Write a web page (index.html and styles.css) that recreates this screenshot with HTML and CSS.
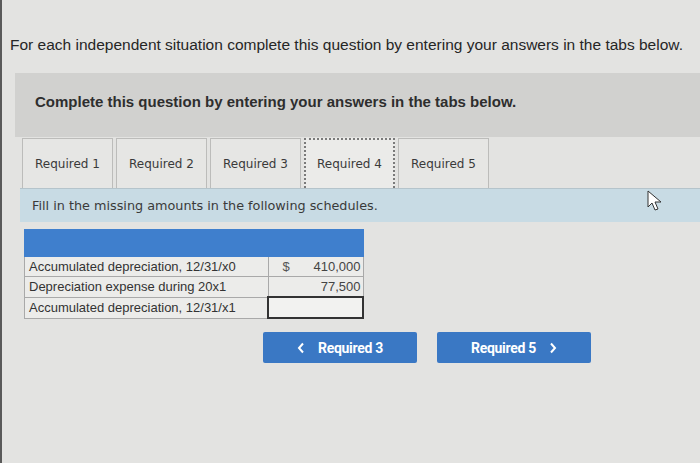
FILE: index.html
```html
<!DOCTYPE html>
<html>
<head>
<meta charset="utf-8">
<link rel="stylesheet" href="styles.css">
</head>
<body>
<div class="page">
  <p class="intro">For each independent situation complete this question by entering your answers in the tabs below.</p>
  <div class="panel">
    <div class="panel-head">Complete this question by entering your answers in the tabs below.</div>
    <div class="tabs">
      <div class="tab">Required 1</div>
      <div class="tab">Required 2</div>
      <div class="tab">Required 3</div>
      <div class="tab active">Required 4</div>
      <div class="tab">Required 5</div>
    </div>
    <div class="instr">Fill in the missing amounts in the following schedules.</div>
    <table class="sched">
      <tr class="hdr"><td colspan="3"></td></tr>
      <tr><td class="lbl">Accumulated depreciation, 12/31/x0</td><td class="cur">$</td><td class="amt">410,000</td></tr>
      <tr><td class="lbl">Depreciation expense during 20x1</td><td class="cur"></td><td class="amt">77,500</td></tr>
      <tr><td class="lbl">Accumulated depreciation, 12/31/x1</td><td class="input" colspan="2"></td></tr>
    </table>
    <div class="nav">
      <button class="btn"><svg class="chev" width="8" height="12" viewBox="0 0 8 12"><polyline points="6,1.5 2,6 6,10.5" fill="none" stroke="#fff" stroke-width="2"/></svg>Required 3</button>
      <button class="btn">Required 5<svg class="chev" width="8" height="12" viewBox="0 0 8 12"><polyline points="2,1.5 6,6 2,10.5" fill="none" stroke="#fff" stroke-width="2"/></svg></button>
    </div>
  </div>
  <svg class="cursor" width="16" height="22" viewBox="0 0 16 22"><path d="M1 1 L1 17 L5 13 L8 20 L11 19 L8 12 L14 12 Z" fill="#fff" stroke="#333" stroke-width="1"/></svg>
</div>
</body>
</html>
```
FILE: styles.css
```css
html, body { margin: 0; padding: 0; }
body { background: #e3e3e1; width: 700px; height: 463px; overflow: hidden; }
.page { position: relative; height: 463px; border-left: 2px solid #5a5a5a; box-sizing: border-box; }
.intro { margin: 0; padding: 36px 0 0 8px; font-family: "Liberation Sans", Arial, sans-serif; font-size: 15.5px; line-height: 18px; color: #262626; white-space: nowrap; }
.panel { margin: 19px 0 0 13px; }
.panel-head { background: #d1d1cf; height: 64px; box-sizing: border-box; padding: 20px 0 0 20px; font-family: "Liberation Sans", Arial, sans-serif; font-weight: bold; font-size: 15px; color: #2e2e2e; }
.tabs { display: flex; gap: 3px; padding: 1px 0 0 7px; height: 51px; box-sizing: border-box; }
.tab { width: 91px; height: 50px; box-sizing: border-box; border: 1px solid #bcbcba; border-bottom: none; background: #e6e6e4; display: flex; align-items: center; justify-content: center; font-family: "DejaVu Sans", Verdana, sans-serif; font-size: 12px; color: #3a3a3a; }
.tab.active { border: 2px dotted #7a7a7a; border-bottom: none; background: #ebebe9; }
.instr { margin-left: 5px; background: #c8dbe4; height: 34px; box-sizing: border-box; padding: 9px 0 0 12px; font-family: "DejaVu Sans", Verdana, sans-serif; font-size: 12.8px; color: #3a3a3a; border-top: 1px solid #b5c4cb; }
.sched { margin: 7px 0 0 9px; border-collapse: collapse; font-family: "Liberation Sans", Arial, sans-serif; font-size: 13px; color: #333; }
.sched td { border: 1px solid #a9a9a9; height: 19px; padding: 0 4px; background: #ececea; }
.sched .hdr td { background: #3f7fcd; height: 26px; border-color: #3f7fcd; }
.sched .lbl { width: 234px; }
.sched .cur { width: 18px; border-right: none; padding-left: 14px; color: #555; }
.sched .amt { width: 52px; text-align: right; border-left: none; padding-right: 2px; color: #444; }
.sched .input { border: 2px solid #333; background: #f2f2f0; }
.nav { display: flex; gap: 20px; margin: 13px 0 0 248px; }
.btn { width: 154px; height: 31px; border: none; border-radius: 2px; background: #3a78c4; color: #fff; font-family: Roboto, "Liberation Sans", sans-serif; font-weight: bold; font-size: 14px; letter-spacing: -0.3px; padding: 0; display: flex; align-items: center; justify-content: center; gap: 13px; }
.chev { display: block; }
.cursor { position: absolute; left: 645px; top: 190px; }
```
